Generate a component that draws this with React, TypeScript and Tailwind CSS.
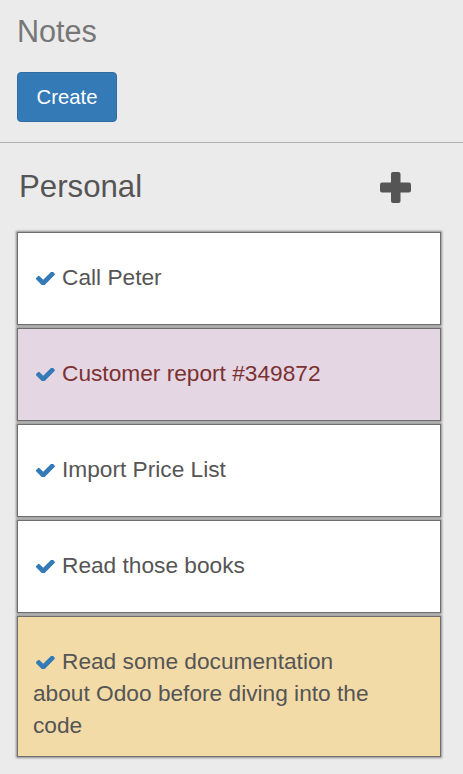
import React from "react";

type Note = { text: string; bg: string; color: string };

const notes: Note[] = [
  { text: "Call Peter", bg: "bg-white", color: "text-[#555555]" },
  { text: "Customer report #349872", bg: "bg-[#e5d6e3]", color: "text-[#7b3131]" },
  { text: "Import Price List", bg: "bg-white", color: "text-[#555555]" },
  { text: "Read those books", bg: "bg-white", color: "text-[#555555]" },
  {
    text: "Read some documentation about Odoo before diving into the code",
    bg: "bg-[#f3dba8]",
    color: "text-[#555555]",
  },
];

function Check() {
  return (
    <svg
      viewBox="40 390 1640 1050"
      width="20"
      height="13"
      className="inline-block align-[0px] ml-[2px] mr-[7px]"
      fill="#337ab7"
    >
      <path d="M1671 566q0 40-28 68l-724 724-136 136q-28 28-68 28t-68-28l-136-136-362-362q-28-28-28-68t28-68l136-136q28-28 68-28t68 28l294 295 656-657q28-28 68-28t68 28l136 136q28 28 28 68z" />
    </svg>
  );
}

function Plus() {
  return (
    <svg viewBox="0 0 31 31" width="31" height="31" fill="#555555">
      <rect x="11" y="0" width="9.5" height="31" rx="2" />
      <rect x="0" y="10.5" width="31" height="10" rx="2" />
    </svg>
  );
}

export default function App() {
  return (
    <div className="min-h-[774px] bg-[#ecebec] font-['Liberation_Sans',Arial,sans-serif]">
      {/* Header */}
      <div className="pt-[15px] pl-[17px] pb-[20px]">
        <h1 className="text-[30.6px] leading-[33px] text-[#777777]">Notes</h1>
        <button className="mt-[24px] w-[100px] h-[50px] rounded-[4px] bg-[#337ab7] border border-[#2e6da4] text-white text-[20.3px]">
          Create
        </button>
      </div>
      <div className="h-px bg-[#b1b0b1]" />

      {/* Column */}
      <div className="pl-[17px] pr-[22px]">
        <div className="flex items-center justify-between pt-[26px] pl-[2px] pr-[30px]">
          <h2 className="text-[31.2px] leading-[36px] text-[#555555]">Personal</h2>
          <Plus />
        </div>

        <div className="mt-[27px] flex flex-col gap-[3px]">
          {notes.map((n) => (
            <div
              key={n.text}
              className={`${n.bg} ${n.color} min-h-[93px] border border-[#6e6e6e] shadow-[0_0_2px_1px_rgba(0,0,0,0.4)] pt-[28px] pb-[15px] pl-[15px] pr-[55px] text-[22.7px] leading-[32px]`}
            >
              <Check />
              {n.text}
            </div>
          ))}
        </div>
      </div>
    </div>
  );
}
